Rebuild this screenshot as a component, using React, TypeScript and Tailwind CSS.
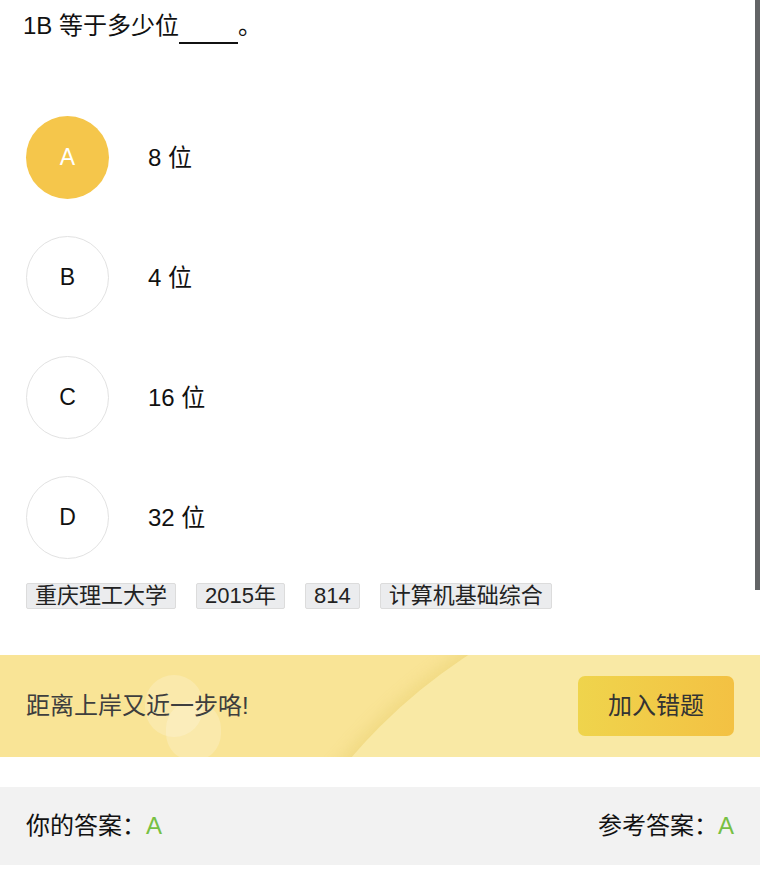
import React from "react";

const font = { fontFamily: '"Liberation Sans", "Noto Sans CJK SC", sans-serif' };

const options = [
  { key: "A", text: "8 位", picked: true },
  { key: "B", text: "4 位", picked: false },
  { key: "C", text: "16 位", picked: false },
  { key: "D", text: "32 位", picked: false },
];

const tags = ["重庆理工大学", "2015年", "814", "计算机基础综合"];

export default function App() {
  return (
    <div
      className="relative min-h-screen w-full overflow-hidden bg-white text-[#111]"
      style={font}
    >
      {/* question */}
      <div className="px-[23px] pt-[10px] text-[24px] leading-[32px]">
        1B 等于多少位<span className="inline-block w-[59px] border-b-2 border-[#111] align-baseline">&nbsp;</span>。
      </div>

      {/* options */}
      <div className="mt-[72px] flex flex-col gap-[37px] px-[26px]">
        {options.map((o) => (
          <div key={o.key} className="flex items-center">
            <div
              className={
                o.picked
                  ? "flex h-[83px] w-[83px] items-center justify-center rounded-full bg-[#f5c64b] text-[23px] text-white"
                  : "flex h-[83px] w-[83px] items-center justify-center rounded-full border border-[#e2e2e2] text-[23px] text-[#111]"
              }
            >
              {o.key}
            </div>
            <div className="ml-[39px] text-[24px]">{o.text}</div>
          </div>
        ))}
      </div>

      {/* tags */}
      <div className="mt-[24px] flex gap-[20px] px-[26px]">
        {tags.map((t) => (
          <span
            key={t}
            className="rounded-[2px] border border-[#dcdcdc] bg-[#ebecee] px-[8px] text-[22px] leading-[24px] text-[#222]"
          >
            {t}
          </span>
        ))}
      </div>

      {/* banner */}
      <div className="relative mt-[46px] flex h-[102px] items-center justify-between overflow-hidden bg-[#f9e496] px-[26px]">
        <div className="absolute left-[219px] top-[-89px] h-[1098px] w-[1098px] rounded-full bg-[#f9e9a5] shadow-[-6px_-4px_14px_rgba(220,190,80,0.25)]" />
        <div className="absolute left-[145px] top-[20px] h-[62px] w-[58px] rounded-full bg-white/20" />
        <div className="absolute left-[166px] top-[46px] h-[60px] w-[55px] rounded-full bg-white/20" />
        <span className="relative text-[24px] text-[#3e3e3e]">距离上岸又近一步咯!</span>
        <button className="relative flex h-[60px] w-[156px] items-center justify-center rounded-[7px] bg-gradient-to-r from-[#efd44c] to-[#f3c143] text-[24px] text-[#333]">
          加入错题
        </button>
      </div>

      {/* answers */}
      <div className="mt-[30px] flex h-[78px] items-center justify-between bg-[#f2f2f2] px-[26px] text-[24px] text-[#111]">
        <span>
          你的答案：<span className="text-[#77c043]">A</span>
        </span>
        <span>
          参考答案：<span className="text-[#77c043]">A</span>
        </span>
      </div>

      {/* scrollbar thumb */}
      <div className="absolute right-0 top-0 h-[590px] w-[5px] bg-[#636466]" />
    </div>
  );
}
